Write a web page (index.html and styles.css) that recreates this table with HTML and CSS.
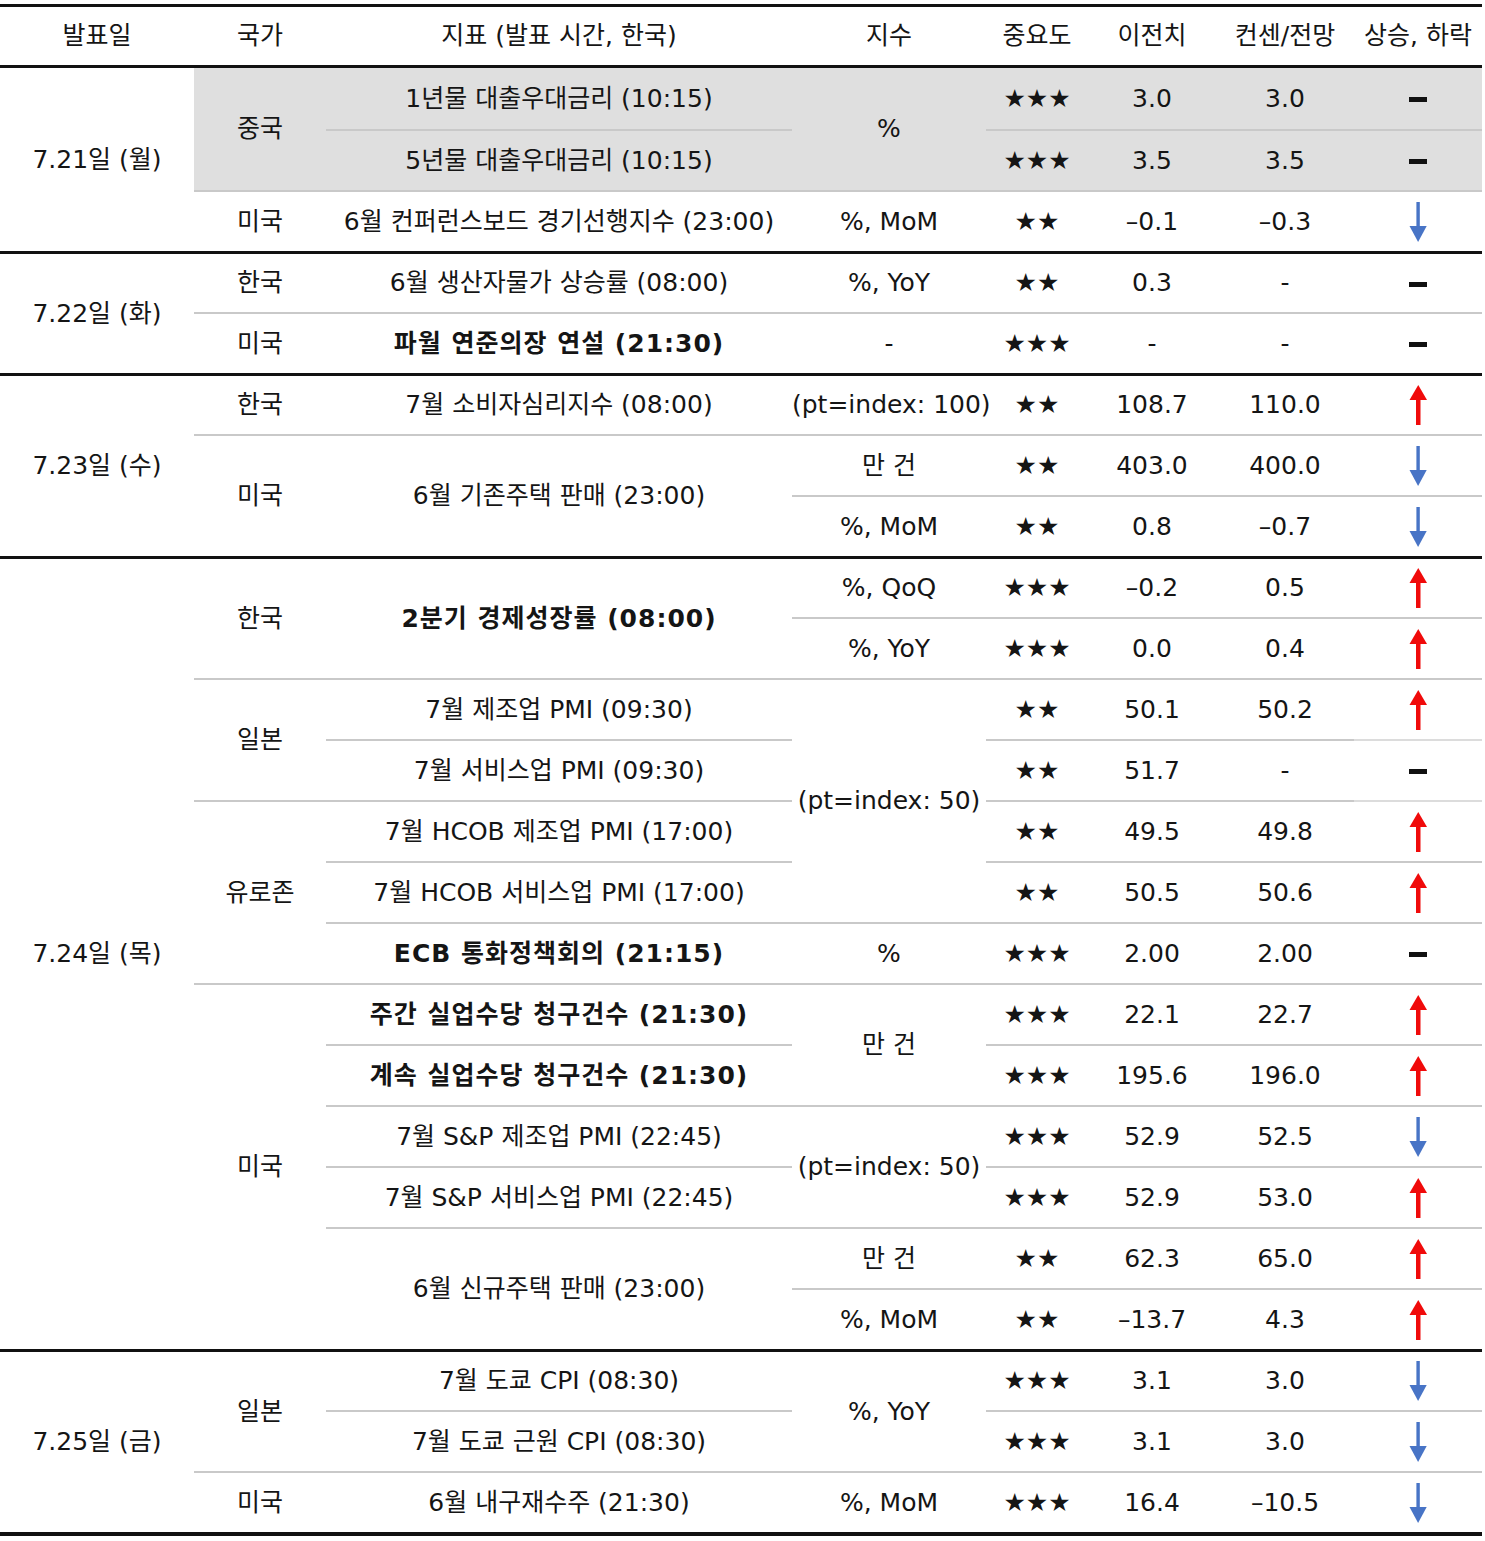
FILE: index.html
```html
<!DOCTYPE html>
<html lang="ko">
<head>
<meta charset="utf-8">
<title>주요 경제지표 일정</title>
<link rel="stylesheet" href="styles.css">
</head>
<body>
<svg class="defs" width="0" height="0" aria-hidden="true">
  <defs>
    <symbol id="up" viewBox="0 0 18 40">
      <rect x="7" y="13" width="4.5" height="27" fill="#f00a0a"/>
      <polygon points="0.5,15 9.25,0 18,15" fill="#f00a0a"/>
    </symbol>
    <symbol id="down" viewBox="0 0 18 40">
      <rect x="7.4" y="0" width="3.4" height="26" fill="#4874c6"/>
      <polygon points="0.5,24 9.1,40 17.7,24" fill="#4874c6"/>
    </symbol>
  </defs>
</svg>
<table class="cal">
  <colgroup>
    <col class="c1"><col class="c2"><col class="c3"><col class="c4">
    <col class="c5"><col class="c6"><col class="c7"><col class="c8">
  </colgroup>
  <thead>
    <tr class="head">
      <th>발표일</th><th>국가</th><th>지표 (발표 시간, 한국)</th><th>지수</th>
      <th>중요도</th><th>이전치</th><th>컨센/전망</th><th>상승, 하락</th>
    </tr>
  </thead>
  <tbody>
    <tr class="first">
      <td rowspan="3">7.21일 (월)</td>
      <td rowspan="2" class="shade">중국</td>
      <td class="shade">1년물 대출우대금리 (10:15)</td>
      <td rowspan="2" class="shade">%</td>
      <td class="shade">★★★</td><td class="shade">3.0</td><td class="shade">3.0</td>
      <td class="shade"><span class="flat"></span></td>
    </tr>
    <tr>
      <td class="shade">5년물 대출우대금리 (10:15)</td>
      <td class="shade">★★★</td><td class="shade">3.5</td><td class="shade">3.5</td>
      <td class="shade"><span class="flat"></span></td>
    </tr>
    <tr>
      <td>미국</td><td>6월 컨퍼런스보드 경기선행지수 (23:00)</td><td>%, MoM</td>
      <td>★★</td><td>–0.1</td><td>–0.3</td>
      <td><svg class="arr"><use href="#down"/></svg></td>
    </tr>

    <tr class="g">
      <td rowspan="2">7.22일 (화)</td>
      <td>한국</td><td>6월 생산자물가 상승률 (08:00)</td><td>%, YoY</td>
      <td>★★</td><td>0.3</td><td>-</td><td><span class="flat"></span></td>
    </tr>
    <tr>
      <td>미국</td><td class="b">파월 연준의장 연설 (21:30)</td><td>-</td>
      <td>★★★</td><td>-</td><td>-</td><td><span class="flat"></span></td>
    </tr>

    <tr class="g">
      <td rowspan="3">7.23일 (수)</td>
      <td>한국</td><td>7월 소비자심리지수 (08:00)</td><td>(pt=index: 100)</td>
      <td>★★</td><td>108.7</td><td>110.0</td>
      <td><svg class="arr"><use href="#up"/></svg></td>
    </tr>
    <tr>
      <td rowspan="2">미국</td><td rowspan="2">6월 기존주택 판매 (23:00)</td><td>만 건</td>
      <td>★★</td><td>403.0</td><td>400.0</td>
      <td><svg class="arr"><use href="#down"/></svg></td>
    </tr>
    <tr>
      <td>%, MoM</td><td>★★</td><td>0.8</td><td>–0.7</td>
      <td><svg class="arr"><use href="#down"/></svg></td>
    </tr>

    <tr class="g">
      <td rowspan="13">7.24일 (목)</td>
      <td rowspan="2">한국</td><td rowspan="2" class="b">2분기 경제성장률 (08:00)</td><td>%, QoQ</td>
      <td>★★★</td><td>–0.2</td><td>0.5</td>
      <td><svg class="arr"><use href="#up"/></svg></td>
    </tr>
    <tr>
      <td>%, YoY</td><td>★★★</td><td>0.0</td><td>0.4</td>
      <td><svg class="arr"><use href="#up"/></svg></td>
    </tr>
    <tr>
      <td rowspan="2">일본</td><td>7월 제조업 PMI (09:30)</td>
      <td rowspan="4">(pt=index: 50)</td>
      <td>★★</td><td>50.1</td><td>50.2</td>
      <td><svg class="arr"><use href="#up"/></svg></td>
    </tr>
    <tr>
      <td>7월 서비스업 PMI (09:30)</td>
      <td>★★</td><td>51.7</td><td>-</td><td class="lite"><span class="flat"></span></td>
    </tr>
    <tr>
      <td rowspan="3">유로존</td><td>7월 HCOB 제조업 PMI (17:00)</td>
      <td>★★</td><td>49.5</td><td>49.8</td>
      <td class="lite"><svg class="arr"><use href="#up"/></svg></td>
    </tr>
    <tr>
      <td>7월 HCOB 서비스업 PMI (17:00)</td>
      <td>★★</td><td>50.5</td><td>50.6</td>
      <td><svg class="arr"><use href="#up"/></svg></td>
    </tr>
    <tr>
      <td class="b">ECB 통화정책회의 (21:15)</td><td>%</td>
      <td>★★★</td><td>2.00</td><td>2.00</td><td><span class="flat"></span></td>
    </tr>
    <tr>
      <td rowspan="6">미국</td><td class="b">주간 실업수당 청구건수 (21:30)</td>
      <td rowspan="2">만 건</td>
      <td>★★★</td><td>22.1</td><td>22.7</td>
      <td><svg class="arr"><use href="#up"/></svg></td>
    </tr>
    <tr>
      <td class="b">계속 실업수당 청구건수 (21:30)</td>
      <td>★★★</td><td>195.6</td><td>196.0</td>
      <td><svg class="arr"><use href="#up"/></svg></td>
    </tr>
    <tr>
      <td>7월 S&amp;P 제조업 PMI (22:45)</td>
      <td rowspan="2">(pt=index: 50)</td>
      <td>★★★</td><td>52.9</td><td>52.5</td>
      <td><svg class="arr"><use href="#down"/></svg></td>
    </tr>
    <tr>
      <td>7월 S&amp;P 서비스업 PMI (22:45)</td>
      <td>★★★</td><td>52.9</td><td>53.0</td>
      <td><svg class="arr"><use href="#up"/></svg></td>
    </tr>
    <tr>
      <td rowspan="2">6월 신규주택 판매 (23:00)</td><td>만 건</td>
      <td>★★</td><td>62.3</td><td>65.0</td>
      <td><svg class="arr"><use href="#up"/></svg></td>
    </tr>
    <tr>
      <td>%, MoM</td><td>★★</td><td>–13.7</td><td>4.3</td>
      <td><svg class="arr"><use href="#up"/></svg></td>
    </tr>

    <tr class="g">
      <td rowspan="3">7.25일 (금)</td>
      <td rowspan="2">일본</td><td>7월 도쿄 CPI (08:30)</td>
      <td rowspan="2">%, YoY</td>
      <td>★★★</td><td>3.1</td><td>3.0</td>
      <td><svg class="arr"><use href="#down"/></svg></td>
    </tr>
    <tr>
      <td>7월 도쿄 근원 CPI (08:30)</td>
      <td>★★★</td><td>3.1</td><td>3.0</td>
      <td><svg class="arr"><use href="#down"/></svg></td>
    </tr>
    <tr>
      <td>미국</td><td>6월 내구재수주 (21:30)</td><td>%, MoM</td>
      <td>★★★</td><td>16.4</td><td>–10.5</td>
      <td><svg class="arr"><use href="#down"/></svg></td>
    </tr>
  </tbody>
</table>
</body>
</html>
```

FILE: styles.css
```css
html, body {
  margin: 0;
  padding: 0;
  background: #ffffff;
}

body {
  padding-top: 4px;
  font-family: "DejaVu Sans", "Noto Sans CJK KR", sans-serif;
  font-size: 25px;
  color: #151515;
}

.defs {
  position: absolute;
  width: 0;
  height: 0;
  overflow: hidden;
}

.cal {
  width: 1482px;
  table-layout: fixed;
  border-collapse: separate;
  border-spacing: 0;
  border-top: 3px solid #111;
  border-bottom: 4px solid #111;
}

.c1 { width: 194px; }
.c2 { width: 132px; }
.c3 { width: 466px; }
.c4 { width: 194px; }
.c5 { width: 102px; }
.c6 { width: 128px; }
.c7 { width: 138px; }
.c8 { width: 128px; }

.cal th,
.cal td {
  padding: 0;
  text-align: center;
  vertical-align: middle;
  white-space: nowrap;
  line-height: 1.2;
}

.head {
  height: 61px;
}

.cal th {
  font-weight: normal;
  border-bottom: 3px solid #111;
}

.cal tbody tr {
  height: 61px;
}

.cal tbody td {
  border-top: 2px solid #c9c9c9;
}

.cal tbody tr.first td {
  border-top: none;
}

.cal tbody tr.g td {
  border-top: 3px solid #111;
}

.cal td.lite {
  border-top-color: #dcdcdc;
}

.shade {
  background: #dfdfdf;
}

.b {
  font-weight: bold;
  letter-spacing: 1px;
}

.flat {
  display: inline-block;
  width: 18px;
  height: 5px;
  background: #111;
  vertical-align: middle;
}

.arr {
  display: inline-block;
  width: 18px;
  height: 40px;
  vertical-align: middle;
}
```
